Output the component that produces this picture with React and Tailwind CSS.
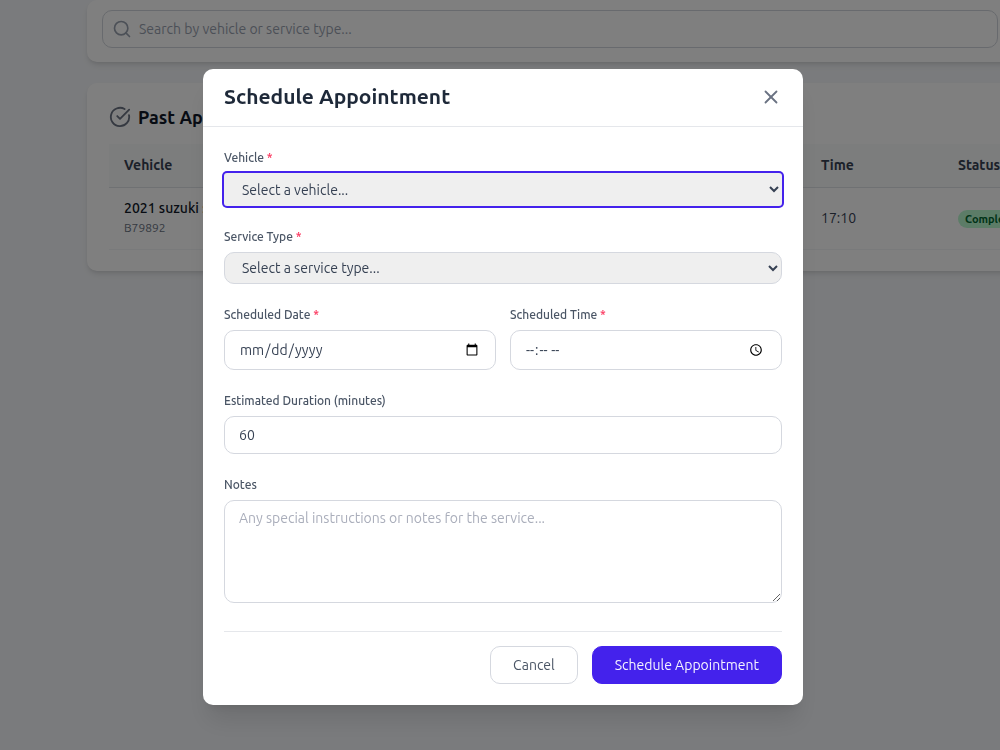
import { CircleCheckBig, Search, X } from "lucide-react";

const labelClass = "mb-[5px] block text-[12px] leading-5 font-medium text-[#4a5565]";
const fieldClass =
  "block w-full rounded-[10px] border border-[#d5d8df] bg-white px-3.5 text-[14px] text-[#364153] outline-none";

function Required() {
  return <span className="text-[#fb2c56]">*</span>;
}

function SearchCard() {
  return (
    <section className="rounded-[10px] bg-white px-[15px] pt-2.5 pb-3.5 shadow-md">
      <div className="flex h-[38px] items-center gap-[7px] rounded-[10px] border border-[#d1d5dc] px-[9px]">
        <Search className="size-5 shrink-0 text-[#99a1af]" strokeWidth={2} />
        <input
          type="search"
          aria-label="Search appointments"
          placeholder="Search by vehicle or service type..."
          className="min-w-0 flex-1 bg-transparent text-[14px] leading-5 text-[#364153] outline-none placeholder:text-[#99a1af]"
        />
      </div>
    </section>
  );
}

function PastAppointments() {
  return (
    <section className="rounded-[10px] bg-white pt-[22px] pb-[21px] pl-[22px] shadow-md">
      <h2 className="flex items-center gap-[7px] text-[18px] leading-6 font-semibold text-[#101828]">
        <CircleCheckBig className="size-[22px] text-[#6a7282]" strokeWidth={2} />
        Past Appointments
      </h2>
      <table className="mt-[15px] w-full table-fixed border-collapse text-left text-[14px] text-[#364153]">
        <thead>
          <tr className="h-[43px] border-b border-[#dfe2e6] bg-[#f9fbfa]">
            <th scope="col" className="w-[350px] pl-[15px] font-semibold">Vehicle</th>
            <th scope="col" className="pl-[15px] font-semibold">Service</th>
            <th scope="col" className="w-[137px] pl-[15px] font-semibold">Time</th>
            <th scope="col" className="w-[70px] pl-[15px] font-semibold">Status</th>
          </tr>
        </thead>
        <tbody>
          <tr className="h-[62px] border-b border-[#f3f4f6]">
            <td className="pl-[15px]">
              <div className="leading-5 font-medium text-[#101828]">2021 suzuki swift</div>
              <div className="text-[12px] leading-5 text-[#6a7282]">B79892</div>
            </td>
            <td className="pl-[15px]">Service</td>
            <td className="pl-[15px]">17:10</td>
            <td className="pl-[15px]">
              <span className="inline-block rounded-full bg-[#b9f8cf] px-[7px] text-[11px] leading-[18px] font-semibold text-[#016630]">
                Completed
              </span>
            </td>
          </tr>
        </tbody>
      </table>
    </section>
  );
}

function AppointmentDialog() {
  return (
    <div
      role="dialog"
      aria-modal="true"
      aria-labelledby="dialog-title"
      className="w-full max-w-[600px] rounded-[10px] bg-white shadow-xl"
    >
      <header className="flex items-center justify-between border-b border-[#e5e7eb] px-[21px] pt-[11px] pb-[13px]">
        <h2 id="dialog-title" className="text-[21px] leading-[33px] font-bold text-[#1e2939]">
          Schedule Appointment
        </h2>
        <button type="button" aria-label="Close" className="text-[#6a7282]">
          <X className="size-[22px]" strokeWidth={2} />
        </button>
      </header>

      <form className="flex flex-col gap-[21px] p-[21px]">
        <div>
          <label htmlFor="vehicle" className={labelClass}>
            Vehicle <Required />
          </label>
          <select
            id="vehicle"
            className="block h-[33px] w-full rounded-[3px] bg-[#efefef] px-3.5 text-[14px] text-[#364153] ring-2 ring-[#4422ec] outline-none"
          >
            <option>Select a vehicle...</option>
          </select>
        </div>

        <div>
          <label htmlFor="service" className={labelClass}>
            Service Type <Required />
          </label>
          <select
            id="service"
            className="block h-8 w-full rounded-[10px] border border-[#d5d8df] bg-[#efefef] px-[13px] text-[14px] text-[#364153] outline-none"
          >
            <option>Select a service type...</option>
          </select>
        </div>

        <div className="grid grid-cols-2 gap-3.5">
          <div>
            <label htmlFor="date" className={labelClass}>
              Scheduled Date <Required />
            </label>
            <input id="date" type="date" className={`${fieldClass} h-10`} />
          </div>
          <div>
            <label htmlFor="time" className={labelClass}>
              Scheduled Time <Required />
            </label>
            <input id="time" type="time" className={`${fieldClass} h-10`} />
          </div>
        </div>

        <div>
          <label htmlFor="duration" className={labelClass}>
            Estimated Duration (minutes)
          </label>
          <input id="duration" type="number" defaultValue={60} className={`${fieldClass} h-[38px]`} />
        </div>

        <div>
          <label htmlFor="notes" className={labelClass}>
            Notes
          </label>
          <textarea
            id="notes"
            placeholder="Any special instructions or notes for the service..."
            className={`${fieldClass} h-[103px] resize py-[7px] leading-[21px] placeholder:text-[#aaaebb]`}
          />
        </div>

        <footer className="mt-[7px] flex justify-end gap-3.5 border-t border-[#e5e7eb] pt-3.5">
          <button
            type="button"
            className="h-[38px] rounded-[10px] border border-[#d5d8df] px-[22px] text-[14px] text-[#4a5565]"
          >
            Cancel
          </button>
          <button
            type="submit"
            className="h-[38px] rounded-[10px] border border-[#4422ec] bg-[#4422ec] px-[22px] text-[14px] text-[#f4f2ff]"
          >
            Schedule Appointment
          </button>
        </footer>
      </form>
    </div>
  );
}

export default function App() {
  return (
    <div className="min-h-screen overflow-x-hidden bg-[#f5f7fa] font-['Ubuntu','Noto_Sans',sans-serif]">
      <main className="-mr-[13px] flex flex-col gap-[21px] pl-[87px]">
        <SearchCard />
        <PastAppointments />
      </main>
      <div className="fixed inset-0 flex items-start justify-center overflow-hidden bg-black/50 pt-[69px] pl-1.5">
        <AppointmentDialog />
      </div>
    </div>
  );
}
